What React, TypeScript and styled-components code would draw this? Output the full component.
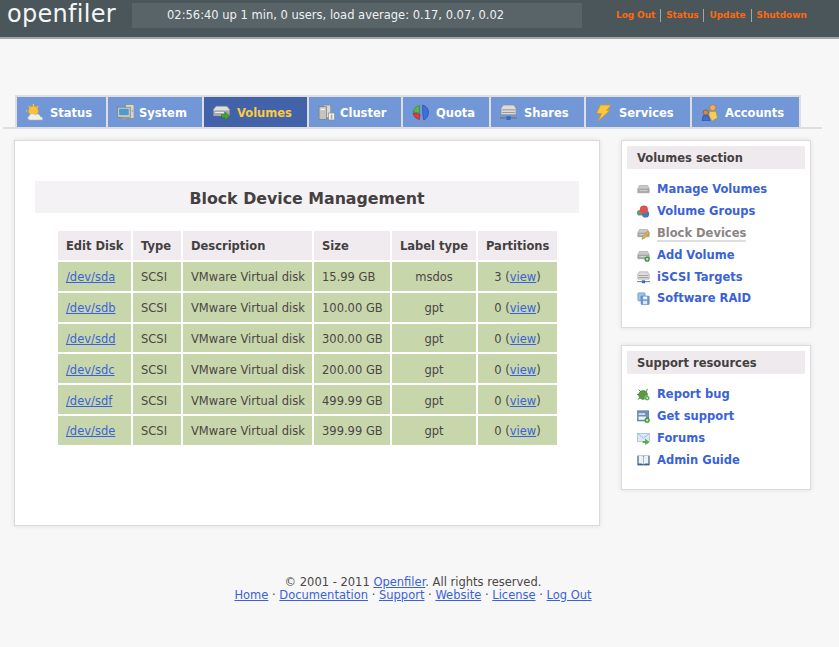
import React from "react";
import styled, { createGlobalStyle } from "styled-components";

// ================================================
//              Data
// ================================================
const tabs = [
  { label: "Status", icon: "sun", width: 89, gap: 7 },
  { label: "System", icon: "monitor", width: 94, gap: 5 },
  { label: "Volumes", icon: "volume", width: 103, gap: 7, active: true },
  { label: "Cluster", icon: "cluster", width: 92, gap: 5 },
  { label: "Quota", icon: "pie", width: 86, gap: 7 },
  { label: "Shares", icon: "share", width: 93, gap: 7 },
  { label: "Services", icon: "bolt", width: 104, gap: 7 },
  { label: "Accounts", icon: "people", width: 107, gap: 7 },
];

const disks = [
  { dev: "/dev/sda", size: "15.99 GB", label: "msdos", parts: 3 },
  { dev: "/dev/sdb", size: "100.00 GB", label: "gpt", parts: 0 },
  { dev: "/dev/sdd", size: "300.00 GB", label: "gpt", parts: 0 },
  { dev: "/dev/sdc", size: "200.00 GB", label: "gpt", parts: 0 },
  { dev: "/dev/sdf", size: "499.99 GB", label: "gpt", parts: 0 },
  { dev: "/dev/sde", size: "399.99 GB", label: "gpt", parts: 0 },
];

const volumeLinks = [
  { label: "Manage Volumes", icon: "disk" },
  { label: "Volume Groups", icon: "groups" },
  { label: "Block Devices", icon: "diskEdit", current: true },
  { label: "Add Volume", icon: "diskAdd" },
  { label: "iSCSI Targets", icon: "share" },
  { label: "Software RAID", icon: "raid" },
];

const supportLinks = [
  { label: "Report bug", icon: "bug" },
  { label: "Get support", icon: "support" },
  { label: "Forums", icon: "mail" },
  { label: "Admin Guide", icon: "book" },
];

const footerLinks = ["Home", "Documentation", "Support", "Website", "License", "Log Out"];

// ================================================
//              Components
// ================================================
const GlobalStyle = createGlobalStyle`
  html, body {
    margin: 0;
    padding: 0;
    background: #f7f7f7;
  }
  body {
    font-family: Verdana, "DejaVu Sans", sans-serif;
    font-size: 11.5px;
    color: #4a4646;
  }
  a {
    color: #3a62d8;
  }
`;
const Page = styled.div`
  width: 839px;
  height: 647px;
  overflow: hidden;
`;
const Header = styled.header`
  height: 37px;
  background: #4b565b;
  border-bottom: 2px solid #a6a6a6;
  display: flex;
  align-items: flex-start;
`;
const Logo = styled.div`
  width: 132px;
  height: 28px;
  padding-left: 7px;
  box-sizing: border-box;
  font-family: "DejaVu Sans", sans-serif;
  font-size: 24px;
  line-height: 28px;
  letter-spacing: 0.3px;
  color: #f4f6f6;
`;
const Uptime = styled.div`
  margin-top: 3px;
  width: 450px;
  height: 25px;
  box-sizing: border-box;
  padding-left: 35px;
  background: #596469;
  color: #eef1f1;
  line-height: 25px;
  white-space: nowrap;
`;
const TopLinks = styled.nav`
  margin: 9px 0 0 34px;
  display: flex;
`;
const TopLink = styled.a`
  color: #fb6a10;
  font-size: 9px;
  font-weight: bold;
  letter-spacing: -0.1px;
  line-height: 13px;
  padding: 0 5px;
  border-left: 1px solid #a6a6a6;
  &:first-child {
    border-left: none;
    padding-left: 0;
  }
`;
const TabRail = styled.div`
  margin: 56px 17px 0 3px;
  padding-left: 12px;
  border-bottom: 2px solid #dedede;
  display: flex;
`;
const TabBar = styled.div`
  display: flex;
  gap: 2px;
  padding: 2px 2px 0;
  background: #dedede;
`;
const Tab = styled.a<{ $width: number; $gap: number; $active?: boolean }>`
  width: ${(p) => p.$width}px;
  height: 30px;
  box-sizing: border-box;
  display: flex;
  align-items: center;
  gap: ${(p) => p.$gap}px;
  padding: 1px 0 0 9px;
  background: ${(p) => (p.$active ? "#4263aa" : "#7297d7")};
  color: ${(p) => (p.$active ? "#fbcb3c" : "#ffffff")};
  font-weight: bold;
  white-space: nowrap;
`;
const Columns = styled.div`
  display: flex;
  align-items: flex-start;
  padding: 11px 0 0 14px;
  gap: 21px;
`;
const Panel = styled.main`
  width: 586px;
  height: 386px;
  box-sizing: border-box;
  background: #fff;
  border: 1px solid #dcdadc;
  box-shadow: 0 0 4px rgba(120, 110, 120, 0.18);
  padding: 40px 20px 0;
`;
const Title = styled.h1`
  margin: 0;
  height: 32px;
  background: #f5f2f5;
  font-size: 15.8px;
  line-height: 35px;
  font-weight: bold;
  text-align: center;
  color: #444040;
`;
const Table = styled.table`
  margin: 16px 0 0 21px;
  border-collapse: separate;
  border-spacing: 2px;
  table-layout: fixed;
  width: 503px;
`;
const Th = styled.th<{ $width: number }>`
  width: ${(p) => p.$width}px;
  height: 29px;
  padding: 0 0 0 8px;
  box-sizing: border-box;
  background: #efebef;
  text-align: left;
  font-weight: bold;
  white-space: nowrap;
  color: #444040;
`;
const Td = styled.td<{ $center?: boolean }>`
  height: 28.8px;
  padding: ${(p) => (p.$center ? "2px 0 0" : "2px 0 0 8px")};
  box-sizing: border-box;
  background: #c8d6ac;
  text-align: ${(p) => (p.$center ? "center" : "left")};
  white-space: nowrap;
`;
const Sidebar = styled.aside`
  display: flex;
  flex-direction: column;
  gap: 17px;
`;
const SideBox = styled.section<{ $height: number }>`
  width: 190px;
  height: ${(p) => p.$height}px;
  box-sizing: border-box;
  background: #fff;
  border: 1px solid #dcdadc;
  box-shadow: 0 0 4px rgba(120, 110, 120, 0.18);
  padding: 5px;
`;
const SideTitle = styled.h3`
  margin: 0 0 9px;
  height: 23px;
  padding-left: 10px;
  background: #efeaee;
  font-size: 11.5px;
  line-height: 24px;
  font-weight: bold;
  color: #444040;
`;
const SideList = styled.ul`
  list-style: none;
  margin: 0;
  padding: 1px 0 0 10px;
`;
const SideItem = styled.li`
  height: 21.8px;
  display: flex;
  align-items: center;
  gap: 7px;
`;
const SideLink = styled.a<{ $current?: boolean }>`
  font-weight: bold;
  line-height: 13px;
  color: ${(p) => (p.$current ? "#8a8583" : "#3a62d8")};
  border-bottom: ${(p) => (p.$current ? "2px solid #dedede" : "none")};
  margin-bottom: ${(p) => (p.$current ? "-2px" : "0")};
`;
const Footer = styled.footer`
  margin: 50px 0 0;
  width: 826px;
  text-align: center;
  line-height: 13px;
`;

// ================================================
//              Icons
// ================================================
const DiskShape = () => (
  <>
    <path d="M3 3h10l2 4v5H1V7z" fill="#c9c9c9" stroke="#8f8f8f" strokeWidth="0.6" />
    <rect x="1" y="7" width="14" height="5" fill="#a4a4a4" />
    <rect x="3" y="9" width="10" height="1" fill="#e2e2e2" />
  </>
);

const drawings: Record<string, React.ReactNode> = {
  sun: (
    <>
      <circle cx="7" cy="6.5" r="4.6" fill="#f6c33a" stroke="#e09a1c" strokeWidth="0.6" />
      <path d="M7 0v2M1 6.5H0M2.5 2l1.3 1.3M11.5 2l-1.3 1.3" stroke="#f3c84a" strokeWidth="1.2" />
      <path d="M4 15c-2.5 0-3-3-1-3.5C3.5 9 7 8.5 8.5 10.5 10 8.5 13 9.5 13.5 12 16 12 16.500 15 14.500 15z" fill="#f0f0ea" stroke="#b8b8b0" strokeWidth="0.5" />
    </>
  ),
  monitor: (
    <>
      <rect x="8" y="0.5" width="8" height="13" fill="#d6d6d2" stroke="#85857f" strokeWidth="0.6" />
      <rect x="0.5" y="3" width="12" height="9.5" fill="#c8c8c4" stroke="#77776f" strokeWidth="0.6" />
      <rect x="2" y="4.5" width="9" height="6" fill="#4f9bcf" />
      <path d="M5 12.5h3l1 2.5H4z" fill="#9a9a94" />
      <rect x="14" y="6" width="1" height="1" fill="#4c9a3c" />
    </>
  ),
  volume: (
    <>
      <path d="M3 2h10l2.5 3v6H.5V5z" fill="#dedede" stroke="#8a8a8a" strokeWidth="0.6" />
      <rect x="1" y="6" width="14" height="5" fill="#a8a8a8" />
      <rect x="2" y="7.5" width="9" height="1" fill="#eeeeee" />
      <path d="M8 10h3V7.5l5 4-5 4V13H8z" fill="#46a23c" stroke="#1f6a1c" strokeWidth="0.5" />
    </>
  ),
  cluster: (
    <>
      <rect x="5" y="1" width="7" height="12" fill="#d8d8d4" stroke="#85857f" strokeWidth="0.6" />
      <rect x="1" y="2.5" width="7" height="12" fill="#c4c4c0" stroke="#77776f" strokeWidth="0.6" />
      <rect x="2.5" y="4.5" width="4" height="1" fill="#ffffff" />
      <rect x="10" y="8.5" width="5.5" height="6.5" fill="#f2f2f2" stroke="#8a8a8a" strokeWidth="0.6" />
      <rect x="12" y="10" width="1.5" height="4" fill="#a8a8a8" />
    </>
  ),
  pie: (
    <>
      <path d="M7 1.5C4 2 2 4 1 7.5l6 1z" fill="#5db548" stroke="#2c7a28" strokeWidth="0.5" />
      <path d="M1 8.5c.5 3 2.5 5.5 6 6l.5-5z" fill="#e33b3b" stroke="#a01818" strokeWidth="0.5" />
      <path d="M10 1c3.5 1 6 4 5.5 8-.5 3-2 5-4.5 6-1-4-1-9-1-14z" fill="#3f6fd8" stroke="#1f3f98" strokeWidth="0.5" />
    </>
  ),
  share: (
    <>
      <path d="M3 1h10l2 3v6H1V4z" fill="#dcdcdc" stroke="#8a8a8a" strokeWidth="0.6" />
      <rect x="2" y="5" width="12" height="1" fill="#9a9a9a" />
      <rect x="2" y="7.5" width="12" height="1" fill="#9a9a9a" />
      <rect x="0" y="12.5" width="16" height="1.2" fill="#777777" />
      <rect x="6" y="11.5" width="4" height="3.5" fill="#2f66d0" />
    </>
  ),
  bolt: <path d="M5 1h10l-4 5h3L3 16l3-7H1.5z" fill="#f6c93e" stroke="#d8941a" strokeWidth="0.7" />,
  people: (
    <>
      <circle cx="11" cy="3.5" r="2.8" fill="#eeb060" stroke="#a86a20" strokeWidth="0.5" />
      <path d="M8 7h6l1.5 6-5 3-3-5z" fill="#f0cf5a" stroke="#b08a20" strokeWidth="0.5" />
      <circle cx="4.5" cy="8" r="2.5" fill="#c98a58" stroke="#6a4020" strokeWidth="0.5" />
      <path d="M1 16l1-5h5l1.5 5z" fill="#3f6fd0" stroke="#1f3f88" strokeWidth="0.5" />
    </>
  ),
  disk: <DiskShape />,
  groups: (
    <>
      <circle cx="3.5" cy="9.5" r="3.5" fill="#5f9c6a" />
      <circle cx="10.5" cy="11" r="4.5" fill="#4a78b8" />
      <circle cx="8.5" cy="5.5" r="5" fill="#e2504e" />
    </>
  ),
  diskEdit: (
    <>
      <DiskShape />
      <path d="M6 15l1-3 6-7 2 2-6 7z" fill="#eeb53a" stroke="#8a6a20" strokeWidth="0.5" />
    </>
  ),
  diskAdd: (
    <>
      <DiskShape />
      <circle cx="12.5" cy="12.5" r="3.2" fill="#3f9a38" />
      <path d="M11 12.5h3M12.5 11v3" stroke="#fff" strokeWidth="1" />
    </>
  ),
  raid: (
    <>
      <rect x="1" y="1" width="9" height="10" rx="1" fill="#9cc0e8" stroke="#4a78b8" strokeWidth="0.6" />
      <rect x="5" y="5" width="10" height="10.5" rx="1" fill="#6e9ad8" stroke="#3a68a8" strokeWidth="0.6" />
      <rect x="7.5" y="5.5" width="5" height="3.5" fill="#f2f6fa" />
      <rect x="7.5" y="11" width="5" height="4" fill="#e0e8f0" />
    </>
  ),
  bug: (
    <>
      <path d="M2 2l3 3M13 1l-2 4M0 8h3M1 14l3-2" stroke="#2e6a24" strokeWidth="1" />
      <ellipse cx="7.5" cy="8.5" rx="5.5" ry="5.5" fill="#5c9a40" stroke="#2e6a24" strokeWidth="0.6" />
      <circle cx="12.5" cy="12.5" r="3" fill="#3f9a38" stroke="#fff" strokeWidth="0.5" />
      <path d="M11 12.5h3M12.5 11v3" stroke="#fff" strokeWidth="0.9" />
    </>
  ),
  support: (
    <>
      <rect x="0.5" y="1" width="14" height="12.5" fill="#6f8fb8" stroke="#4a6488" strokeWidth="0.6" />
      <rect x="2" y="4" width="8" height="2" fill="#dfe8f2" />
      <rect x="2" y="8" width="9" height="4" fill="#f2f5f8" />
      <circle cx="12.5" cy="12.5" r="3.2" fill="#3f9a38" />
      <path d="M11 12.5h3M12.5 11v3" stroke="#fff" strokeWidth="1" />
    </>
  ),
  mail: (
    <>
      <rect x="0.5" y="1.5" width="15" height="10" fill="#dce8f6" stroke="#7a9cc8" strokeWidth="0.6" />
      <path d="M1 2l7 5.5L15 2" fill="none" stroke="#8aa8d0" strokeWidth="0.8" />
      <path d="M7 11h3V8l5.5 4.5-5.5 3.5v-2.5H7z" fill="#62a848" />
    </>
  ),
  book: (
    <>
      <path d="M0.5 2h15v12h-15z" fill="#3a5f88" />
      <path d="M2 2.5c2-.5 4.5-.5 6 1 1.5-1.5 4-1.5 6-1V12c-2-.5-4.5-.5-6 1-1.5-1.5-4-1.5-6-1z" fill="#eef2f6" />
      <path d="M8 3.5V13" stroke="#7a8a9a" strokeWidth="0.7" />
    </>
  ),
};

const Glyph = styled.svg<{ $size: number }>`
  width: ${(p) => p.$size}px;
  height: ${(p) => p.$size}px;
  flex: none;
`;
const Icon = ({ name, size }: { name: string; size: number }) => (
  <Glyph $size={size} viewBox="0 0 16 16">
    {drawings[name]}
  </Glyph>
);

// ================================================
//              App
// ================================================
const App = () => {
  const header = [
    { label: "Edit Disk", width: 73 },
    { label: "Type", width: 48 },
    { label: "Description", width: 129 },
    { label: "Size", width: 76 },
    { label: "Label type", width: 84 },
    { label: "Partitions", width: 79 },
  ];

  return (
    <Page>
      <GlobalStyle />
      <Header>
        <Logo>openfiler</Logo>
        <Uptime>02:56:40 up 1 min, 0 users, load average: 0.17, 0.07, 0.02</Uptime>
        <TopLinks>
          <TopLink>Log Out</TopLink>
          <TopLink>Status</TopLink>
          <TopLink>Update</TopLink>
          <TopLink>Shutdown</TopLink>
        </TopLinks>
      </Header>
      <TabRail>
        <TabBar>
          {tabs.map((tab) => (
            <Tab key={tab.label} $width={tab.width} $gap={tab.gap} $active={tab.active}>
              <Icon name={tab.icon} size={17} />
              {tab.label}
            </Tab>
          ))}
        </TabBar>
      </TabRail>
      <Columns>
        <Panel>
          <Title>Block Device Management</Title>
          <Table>
            <thead>
              <tr>
                {header.map((h) => (
                  <Th key={h.label} $width={h.width}>
                    {h.label}
                  </Th>
                ))}
              </tr>
            </thead>
            <tbody>
              {disks.map((disk) => (
                <tr key={disk.dev}>
                  <Td>
                    <a href="#">{disk.dev}</a>
                  </Td>
                  <Td>SCSI</Td>
                  <Td>VMware Virtual disk</Td>
                  <Td>{disk.size}</Td>
                  <Td $center>{disk.label}</Td>
                  <Td $center>
                    {disk.parts} (<a href="#">view</a>)
                  </Td>
                </tr>
              ))}
            </tbody>
          </Table>
        </Panel>
        <Sidebar>
          <SideBox $height={188}>
            <SideTitle>Volumes section</SideTitle>
            <SideList>
              {volumeLinks.map((link) => (
                <SideItem key={link.label}>
                  <Icon name={link.icon} size={13} />
                  <SideLink $current={link.current}>{link.label}</SideLink>
                </SideItem>
              ))}
            </SideList>
          </SideBox>
          <SideBox $height={145}>
            <SideTitle>Support resources</SideTitle>
            <SideList>
              {supportLinks.map((link) => (
                <SideItem key={link.label}>
                  <Icon name={link.icon} size={13} />
                  <SideLink>{link.label}</SideLink>
                </SideItem>
              ))}
            </SideList>
          </SideBox>
        </Sidebar>
      </Columns>
      <Footer>
        <div>
          © 2001 - 2011 <a href="#">Openfiler</a>. All rights reserved.
        </div>
        <div>
          {footerLinks.map((link, i) => (
            <React.Fragment key={link}>
              {i > 0 && " · "}
              <a href="#">{link}</a>
            </React.Fragment>
          ))}
        </div>
      </Footer>
    </Page>
  );
};

export default App;
